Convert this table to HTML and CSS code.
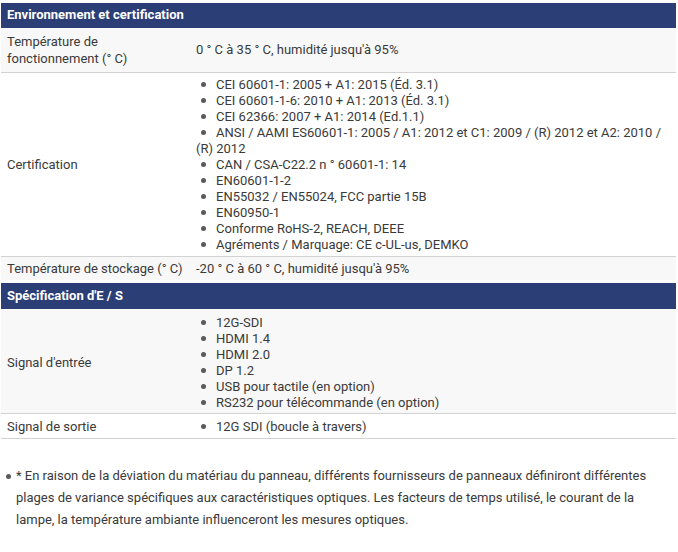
FILE: index.html
```html
<!DOCTYPE html>
<html lang="fr">
<head>
<meta charset="utf-8">
<title>Spécifications</title>
<link rel="stylesheet" href="styles.css">
</head>
<body>
<table class="spec">
  <colgroup>
    <col class="col-label">
    <col class="col-value">
  </colgroup>
  <tbody>
    <tr class="head"><th colspan="2">Environnement et certification</th></tr>
    <tr class="alt r-op">
      <td class="label">Température de fonctionnement (° C)</td>
      <td class="value">0 ° C à 35 ° C, humidité jusqu'à 95%</td>
    </tr>
    <tr>
      <td class="label">Certification</td>
      <td class="value">
        <ul class="bul">
          <li>CEI 60601-1: 2005 + A1: 2015 (Éd. 3.1)</li>
          <li>CEI 60601-1-6: 2010 + A1: 2013 (Éd. 3.1)</li>
          <li>CEI 62366: 2007 + A1: 2014 (Ed.1.1)</li>
          <li>ANSI / AAMI ES60601-1: 2005 / A1: 2012 et C1: 2009 / (R) 2012 et A2: 2010 / (R) 2012</li>
          <li>CAN / CSA-C22.2 n ° 60601-1: 14</li>
          <li>EN60601-1-2</li>
          <li>EN55032 / EN55024, FCC partie 15B</li>
          <li>EN60950-1</li>
          <li>Conforme RoHS-2, REACH, DEEE</li>
          <li>Agréments / Marquage: CE c-UL-us, DEMKO</li>
        </ul>
      </td>
    </tr>
    <tr class="alt">
      <td class="label">Température de stockage (° C)</td>
      <td class="value">-20 ° C à 60 ° C, humidité jusqu'à 95%</td>
    </tr>
    <tr class="head gap"><th colspan="2">Spécification d'E / S</th></tr>
    <tr class="alt r-in">
      <td class="label">Signal d'entrée</td>
      <td class="value">
        <ul class="bul">
          <li>12G-SDI</li>
          <li>HDMI 1.4</li>
          <li>HDMI 2.0</li>
          <li>DP 1.2</li>
          <li>USB pour tactile (en option)</li>
          <li>RS232 pour télécommande (en option)</li>
        </ul>
      </td>
    </tr>
    <tr class="r-out">
      <td class="label">Signal de sortie</td>
      <td class="value">
        <ul class="bul"><li>12G SDI (boucle à travers)</li></ul>
      </td>
    </tr>
  </tbody>
</table>
<ul class="note">
  <li>* En raison de la déviation du matériau du panneau, différents fournisseurs de panneaux définiront différentes plages de variance spécifiques aux caractéristiques optiques. Les facteurs de temps utilisé, le courant de la lampe, la température ambiante influenceront les mesures optiques.</li>
</ul>
</body>
</html>
```
FILE: styles.css
```css
html, body {
  margin: 0;
  padding: 0;
  background: #ffffff;
}
body {
  font-family: Roboto, "Liberation Sans", sans-serif;
  font-size: 13px;
  color: #3a3a3a;
  padding: 3px 3px 0 1px;
}
.spec {
  width: 675px;
  border-collapse: collapse;
  table-layout: fixed;
}
.col-label {
  width: 195px;
}
.spec td, .spec th {
  padding: 4px 6px 3px;
  line-height: 16px;
  vertical-align: middle;
  text-align: left;
}
.head th {
  background: #2b3e76;
  color: #ffffff;
  font-weight: 700;
  padding: 4px 6px 5px;
}
.head.gap th {
  border-top: 3px solid #ffffff;
  padding: 5px 6px 5px;
}
.spec tr:not(.head) td {
  border-bottom: 1px solid #d2d2d2;
}
.alt td {
  background: #f8f8f8;
}
.spec tr.r-op td {
  padding-top: 5px;
  padding-bottom: 5px;
}
.spec tr.r-op td.label {
  line-height: 17px;
}
.spec tr.r-in td {
  padding-top: 6px;
  padding-bottom: 2px;
}
.spec tr.r-out td {
  padding-top: 5px;
  padding-bottom: 3px;
}
.spec td.value {
  padding-left: 0;
  padding-right: 10px;
}
.bul {
  list-style: none;
  margin: 0;
  padding: 0;
}
.bul li::before {
  content: "";
  display: inline-block;
  width: 5px;
  height: 5px;
  border-radius: 50%;
  background: #5a5a5a;
  margin: 0 10px 0 5px;
  vertical-align: 2px;
}
.note {
  list-style: none;
  margin: 26px 0 0 0;
  padding: 0 8px 0 15px;
  line-height: 22px;
  font-size: 13px;
  color: #3a3a3a;
}
.note li {
  position: relative;
}
.note li::before {
  content: "";
  position: absolute;
  left: -10px;
  top: 9px;
  width: 5px;
  height: 5px;
  border-radius: 50%;
  background: #5a5a5a;
}
```
